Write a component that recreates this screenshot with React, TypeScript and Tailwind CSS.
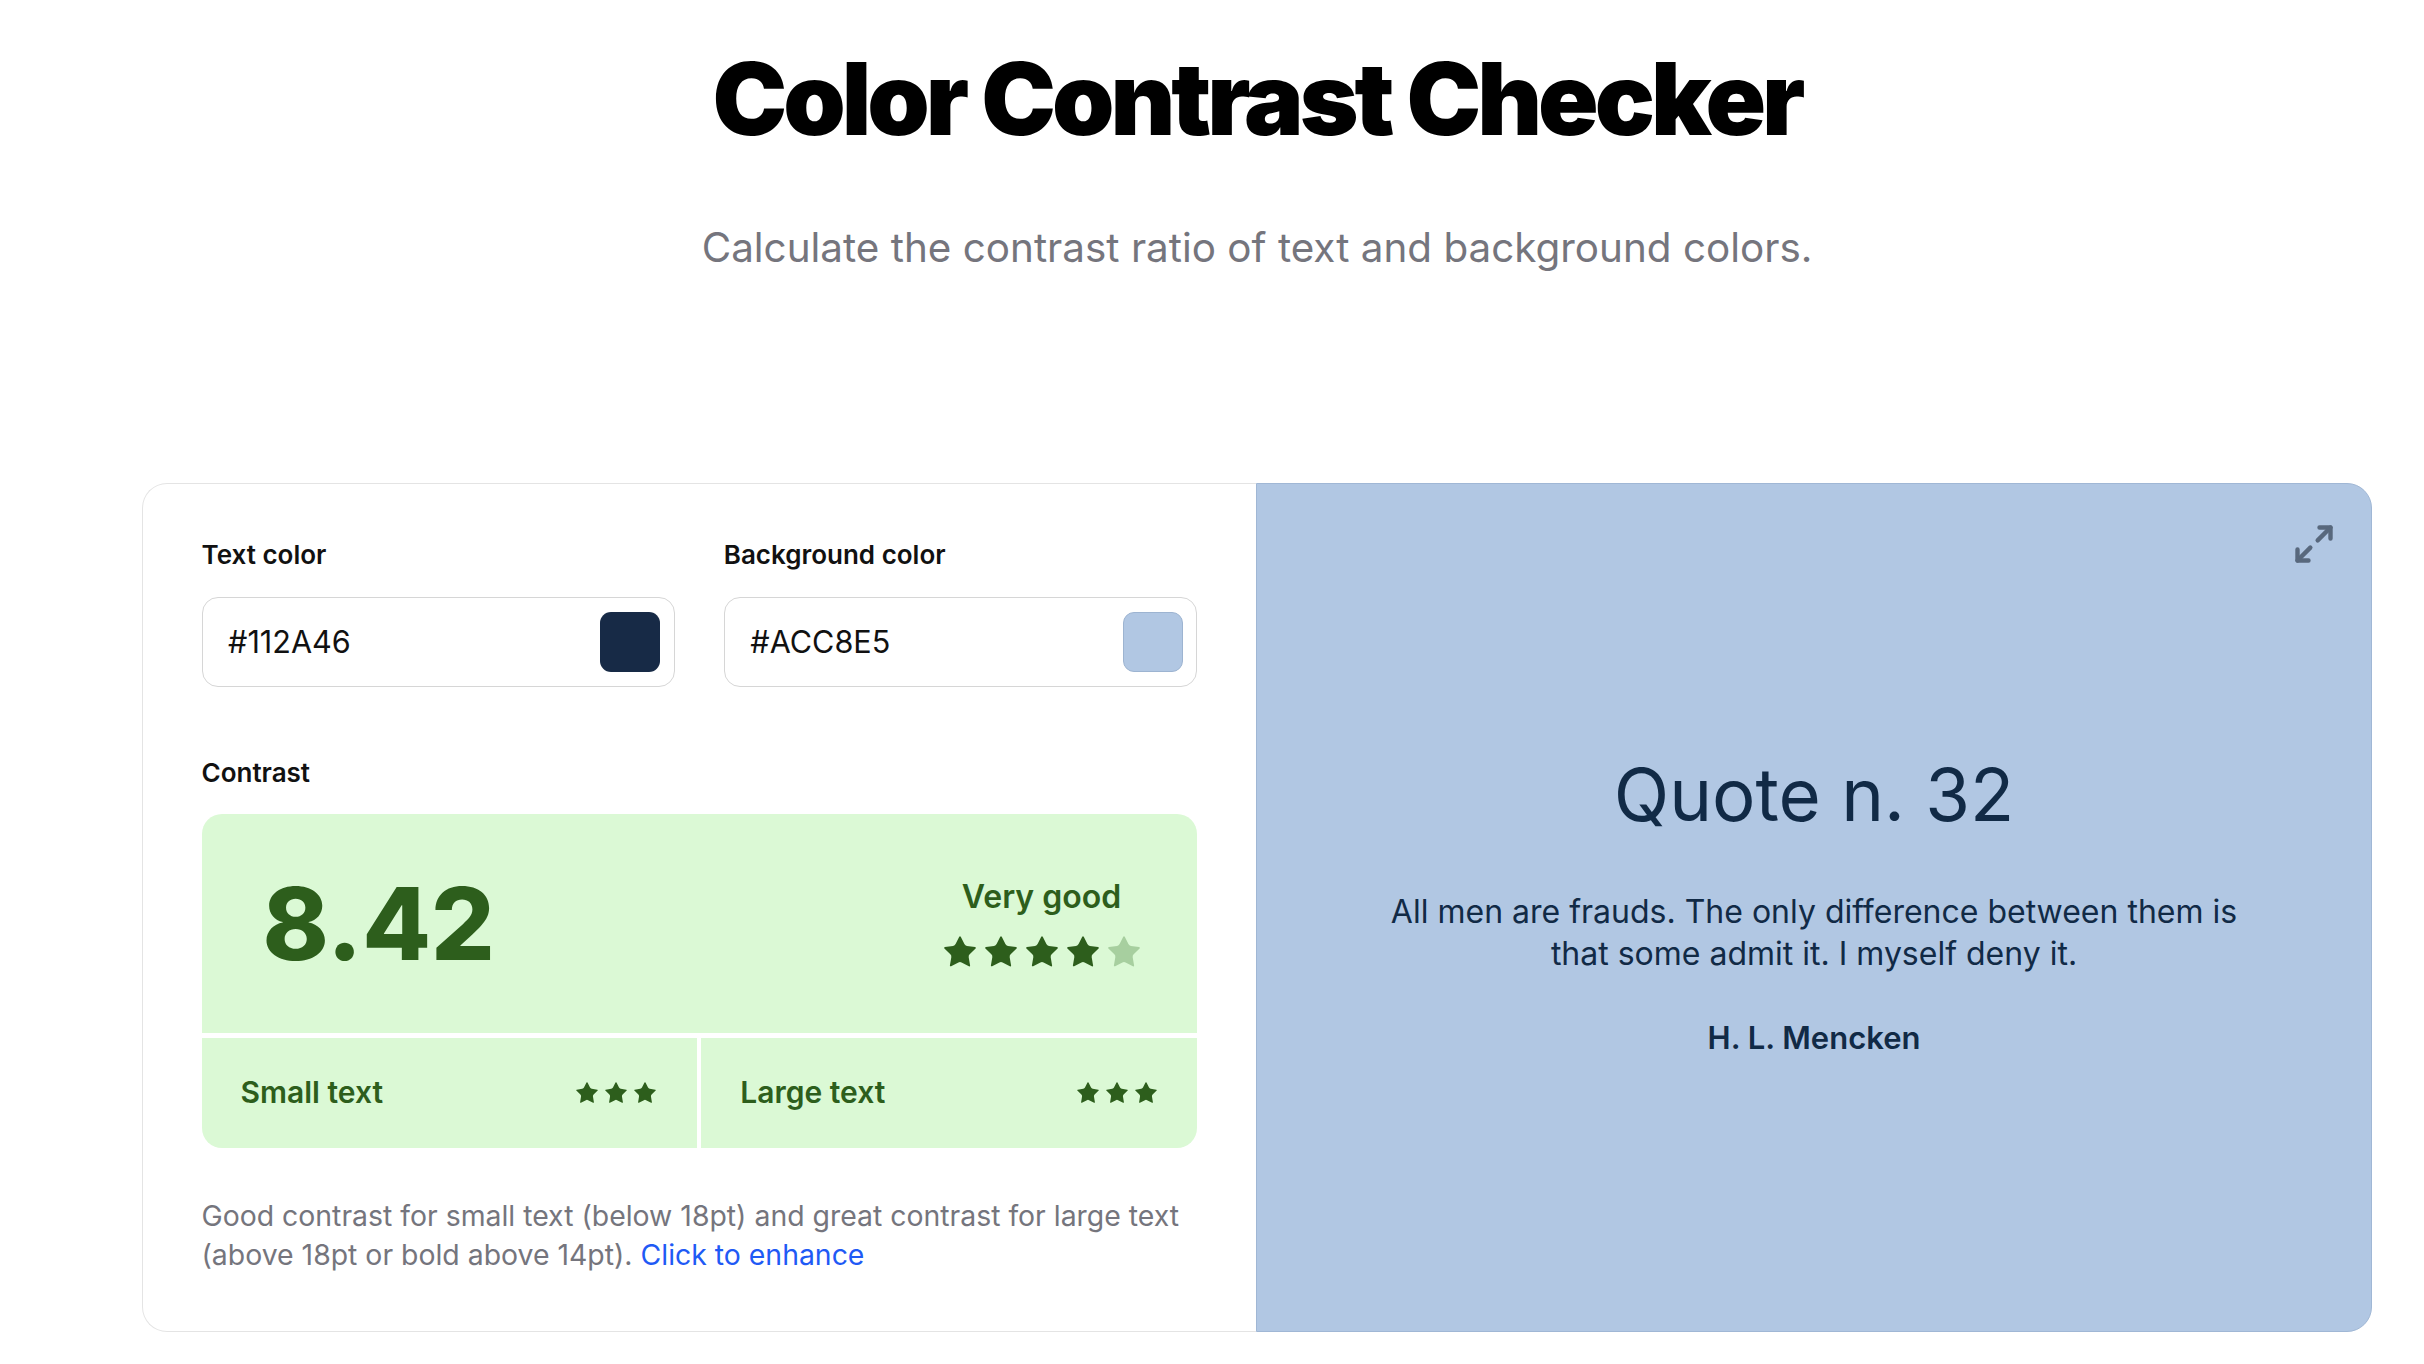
import { Maximize2 } from 'lucide-react'

const STAR_PATH =
  'M11.525 2.295a.53.53 0 0 1 .95 0l2.31 4.679a2.123 2.123 0 0 0 1.595 1.16l5.166.756a.53.53 0 0 1 .294.904l-3.736 3.638a2.123 2.123 0 0 0-.611 1.878l.882 5.14a.53.53 0 0 1-.771.56l-4.618-2.428a2.122 2.122 0 0 0-1.973 0L6.396 21.01a.53.53 0 0 1-.77-.56l.881-5.139a2.122 2.122 0 0 0-.611-1.879L2.16 9.795a.53.53 0 0 1 .294-.906l5.165-.755a2.122 2.122 0 0 0 1.597-1.16z'

function Star({ size, dim = false }: { size: number; dim?: boolean }) {
  return (
    <svg
      width={size}
      height={size}
      viewBox="0 0 24 24"
      className={dim ? 'text-[#a7cf9f]' : 'text-[#2d5e1c]'}
      aria-hidden="true"
    >
      <path d={STAR_PATH} fill="currentColor" />
    </svg>
  )
}

function Stars({ count, filled, size }: { count: number; filled: number; size: number }) {
  return (
    <div className="flex items-center gap-[3px]">
      {Array.from({ length: count }).map((_, i) => (
        <Star key={i} size={size} dim={i >= filled} />
      ))}
    </div>
  )
}

function ColorField({ label, value, swatch, bordered }: { label: string; value: string; swatch: string; bordered?: boolean }) {
  return (
    <div>
      <div className="text-[26px] leading-[36px] font-semibold text-[#111]">{label}</div>
      <div className="mt-[24px] flex h-[90px] items-center justify-between rounded-[16px] border-[1.5px] border-[#d6d6d6] pl-[25.5px] pr-[13.5px]">
        <span className="text-[30.6px] text-[#111]">{value}</span>
        <span
          className={
            bordered
              ? 'h-[60px] w-[60px] rounded-[11px] border-[1.5px] border-[#9db4d1]'
              : 'h-[60px] w-[60px] rounded-[11px]'
          }
          style={{ backgroundColor: swatch }}
        />
      </div>
    </div>
  )
}

export default function App() {
  return (
    <div className="min-h-screen bg-white pl-[142px] pr-[52px] font-['Inter','Noto_Sans',sans-serif]">
      <h1 className="pt-[48.5px] text-center text-[100px] leading-[100px] font-black tracking-[-0.04em] text-black">
        Color Contrast Checker
      </h1>
      <p className="mt-[71.5px] text-center text-[40.4px] leading-[56px] text-[#75757d]">
        Calculate the contrast ratio of text and background colors.
      </p>

      <div className="mt-[207px] flex">
        {/* controls */}
        <div className="w-[1114px] rounded-l-[25px] border-y-[1.5px] border-l-[1.5px] border-[#e4e4e4] pt-[52.5px] pr-[59px] pb-[57.5px] pl-[58.5px]">
          <div className="grid grid-cols-2 gap-x-[49px]">
            <ColorField label="Text color" value="#112A46" swatch="#172a46" />
            <ColorField label="Background color" value="#ACC8E5" swatch="#b1c7e3" bordered />
          </div>

          <div className="mt-[68.5px] text-[26px] leading-[36px] font-semibold text-[#111]">Contrast</div>

          <div className="mt-[23px] grid gap-[4.5px]">
            <div className="flex h-[219px] items-center justify-between rounded-t-[20px] bg-[#dbf9d5] pl-[61px] pr-[54.5px]">
              <span className="text-[100px] leading-[120px] font-extrabold text-[#2d5e1c]">8.42</span>
              <div className="flex flex-col items-center">
                <span className="text-[32px] leading-[40px] font-semibold text-[#2d5e1c]">Very good</span>
                <div className="mt-[16px]">
                  <Stars count={5} filled={4} size={38} />
                </div>
              </div>
            </div>
            <div className="grid grid-cols-2 gap-[4px]">
              <div className="flex h-[110px] items-center justify-between rounded-bl-[20px] bg-[#dbf9d5] pl-[39px] pr-[39px]">
                <span className="text-[30px] font-semibold text-[#2d5e1c]">Small text</span>
                <Stars count={3} filled={3} size={26} />
              </div>
              <div className="flex h-[110px] items-center justify-between rounded-br-[20px] bg-[#dbf9d5] pl-[39px] pr-[38px]">
                <span className="text-[30px] font-semibold text-[#2d5e1c]">Large text</span>
                <Stars count={3} filled={3} size={26} />
              </div>
            </div>
          </div>

          <p className="mt-[48px] text-[28.4px] leading-[39px] text-[#75757d]">
            Good contrast for small text (below 18pt) and great contrast for large text (above 18pt or bold above
            14pt). <span className="text-[#1f5af5]">Click to enhance</span>
          </p>
        </div>

        {/* preview */}
        <div className="relative flex flex-1 flex-col items-center justify-center rounded-r-[25px] border-[1.5px] border-[#a0b7d5] bg-[#b1c7e3] pb-[4px] text-[#112A46]">
          <button type="button" className="absolute top-[38px] right-[35px] text-[#58687d]" aria-label="Expand">
            <Maximize2 size={44} strokeWidth={2.4} />
          </button>
          <div className="text-[72.5px] leading-[86px]">Quote n. 32</div>
          <p className="mt-[53px] max-w-[870px] text-center text-[32px] leading-[42px]">
            All men are frauds. The only difference between them is that some admit it. I myself deny it.
          </p>
          <div className="mt-[42.5px] text-[31px] leading-[42px] font-semibold">H. L. Mencken</div>
        </div>
      </div>
    </div>
  )
}
